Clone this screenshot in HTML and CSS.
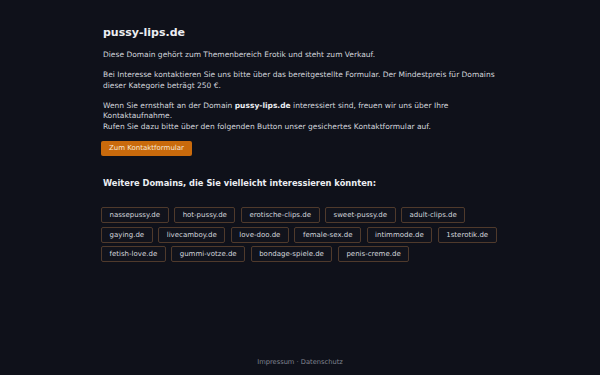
FILE: index.html
```html
<!DOCTYPE html>
<html lang="de">
<head>
  <meta charset="UTF-8">
  <title>pussy-lips.de</title>
  <link rel="stylesheet" href="styles.css">
</head>
<body>
<div class="page">
  <main class="content">
    <h1 class="content__title">pussy-lips.de</h1>
    <p class="content__text">Diese Domain gehört zum Themenbereich Erotik und steht zum Verkauf.</p>
    <p class="content__text">Bei Interesse kontaktieren Sie uns bitte über das bereitgestellte Formular. Der Mindestpreis für Domains dieser Kategorie beträgt 250 €.</p>
    <p class="content__text">Wenn Sie ernsthaft an der Domain <strong>pussy-lips.de</strong> interessiert sind, freuen wir uns über Ihre Kontaktaufnahme.<br>Rufen Sie dazu bitte über den folgenden Button unser gesichertes Kontaktformular auf.</p>
    <a class="button" href="#">Zum Kontaktformular</a>

    <h2 class="content__subtitle">Weitere Domains, die Sie vielleicht interessieren könnten:</h2>
    <ul class="domains">
      <li><a class="domain" href="#">nassepussy.de</a></li>
      <li><a class="domain" href="#">hot-pussy.de</a></li>
      <li><a class="domain" href="#">erotische-clips.de</a></li>
      <li><a class="domain" href="#">sweet-pussy.de</a></li>
      <li><a class="domain" href="#">adult-clips.de</a></li>
      <li><a class="domain" href="#">gaying.de</a></li>
      <li><a class="domain" href="#">livecamboy.de</a></li>
      <li><a class="domain" href="#">love-doo.de</a></li>
      <li><a class="domain" href="#">female-sex.de</a></li>
      <li><a class="domain" href="#">intimmode.de</a></li>
      <li><a class="domain" href="#">1sterotik.de</a></li>
      <li><a class="domain" href="#">fetish-love.de</a></li>
      <li><a class="domain" href="#">gummi-votze.de</a></li>
      <li><a class="domain" href="#">bondage-spiele.de</a></li>
      <li><a class="domain" href="#">penis-creme.de</a></li>
    </ul>
  </main>

  <footer class="footer">
    <a href="#">Impressum</a> · <a href="#">Datenschutz</a>
  </footer>
</div>
</body>
</html>
```

FILE: styles.css
```css
* {
  margin: 0;
  padding: 0;
  box-sizing: border-box;
}

:root {
  --color-bg: #0f111a;
  --color-text: #d3d6dd;
  --color-title: #eceef2;
  --color-orange: #c96a0c;
  --color-border: #4f3a2c;
  --color-muted: #80848f;
}

body {
  background-color: var(--color-bg);
  color: var(--color-text);
  font-family: "DejaVu Sans", sans-serif;
  font-size: 7.5px;
  line-height: 10.5px;
}

.page {
  min-height: 100vh;
  display: flex;
  flex-direction: column;
}

.content {
  width: 394px;
  margin: 0 auto;
  padding-top: 26px;
  flex: 1;
}

.content__title {
  font-size: 11px;
  line-height: 13px;
  font-weight: bold;
  color: var(--color-title);
  margin-bottom: 11px;
}

.content__text {
  margin-bottom: 9.5px;
}

.content__text strong {
  color: var(--color-title);
}

.button {
  display: inline-block;
  background-color: var(--color-orange);
  color: #f6e6d6;
  text-decoration: none;
  font-size: 7px;
  padding: 2px 8px;
  border-radius: 2px;
  line-height: 11px;
  margin-left: -2px;
  margin-top: -1px;
}

.content__subtitle {
  font-size: 8.3px;
  font-weight: bold;
  color: var(--color-title);
  margin-top: 22px;
  margin-bottom: 19px;
}

.domains {
  list-style: none;
  display: flex;
  flex-wrap: wrap;
  gap: 3.5px 5.5px;
  margin-left: -2px;
}

.domain {
  display: block;
  color: var(--color-text);
  text-decoration: none;
  font-size: 7px;
  border: 1px solid var(--color-border);
  border-radius: 2px;
  padding: 2px 7.5px;
  line-height: 10px;
  background-color: #11131c;
}

.footer {
  text-align: center;
  color: var(--color-muted);
  font-size: 6.7px;
  padding-bottom: 8px;
}

.footer a {
  color: var(--color-muted);
  text-decoration: none;
}
```
